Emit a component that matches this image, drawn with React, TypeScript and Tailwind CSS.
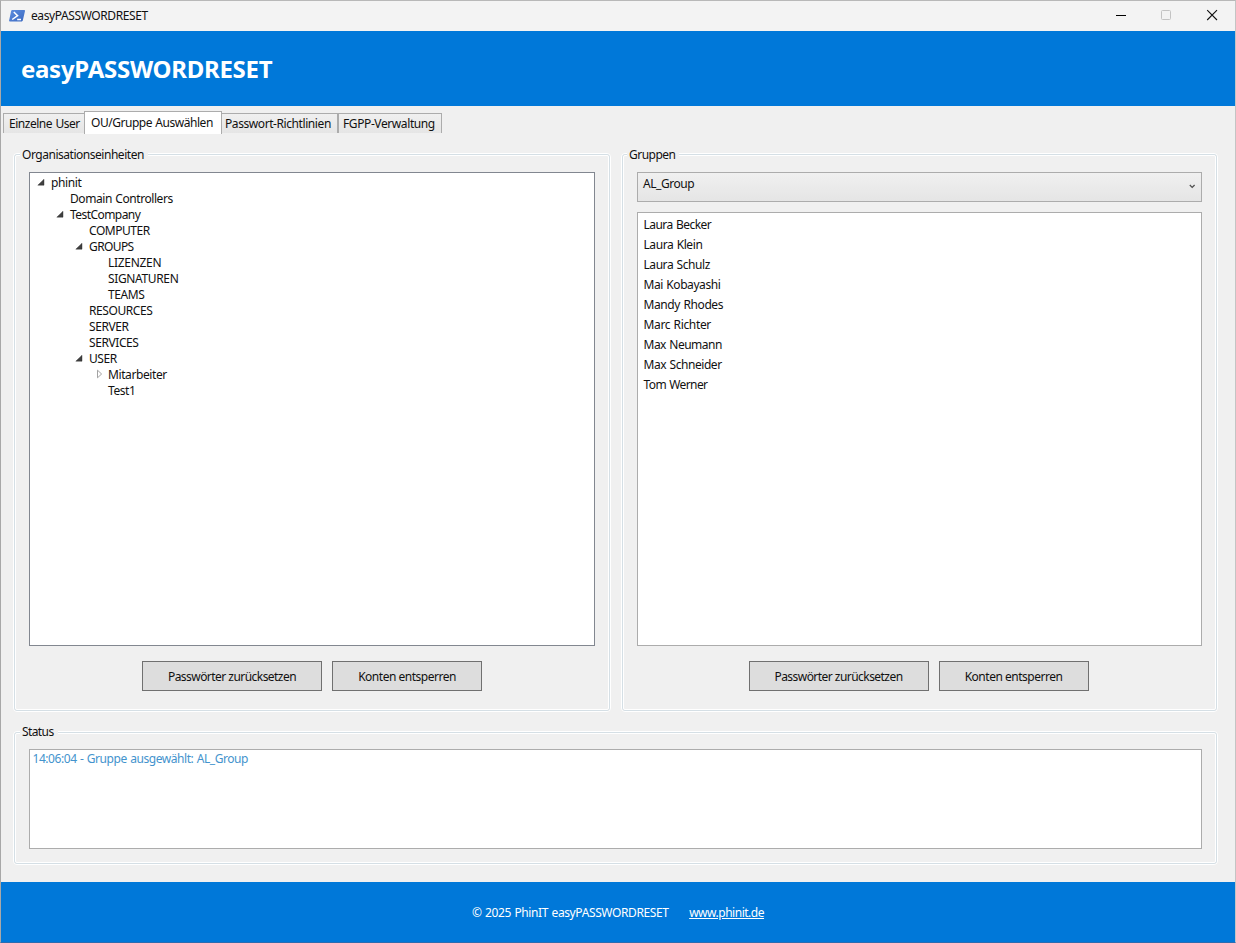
import type { ReactNode } from "react";

type Entry = { text: string; tracking: string };
type Node = Entry & { indent: string; state?: "open" | "closed" };

const tree: Node[] = [
  { text: "phinit", tracking: "tracking-[-0.4px]", indent: "pl-[7px]", state: "open" },
  { text: "Domain Controllers", tracking: "tracking-[-0.43px]", indent: "pl-[26px]" },
  { text: "TestCompany", tracking: "tracking-[-0.56px]", indent: "pl-[26px]", state: "open" },
  { text: "COMPUTER", tracking: "tracking-[-0.46px]", indent: "pl-[45px]" },
  { text: "GROUPS", tracking: "tracking-[-0.6px]", indent: "pl-[45px]", state: "open" },
  { text: "LIZENZEN", tracking: "tracking-[-0.3px]", indent: "pl-[64px]" },
  { text: "SIGNATUREN", tracking: "tracking-[-0.36px]", indent: "pl-[64px]" },
  { text: "TEAMS", tracking: "tracking-[-0.4px]", indent: "pl-[64px]" },
  { text: "RESOURCES", tracking: "tracking-[-0.41px]", indent: "pl-[45px]" },
  { text: "SERVER", tracking: "tracking-[-0.42px]", indent: "pl-[45px]" },
  { text: "SERVICES", tracking: "tracking-[-0.42px]", indent: "pl-[45px]" },
  { text: "USER", tracking: "tracking-[-0.44px]", indent: "pl-[45px]", state: "open" },
  { text: "Mitarbeiter", tracking: "tracking-[-0.4px]", indent: "pl-[64px]", state: "closed" },
  { text: "Test1", tracking: "tracking-[-0.45px]", indent: "pl-[64px]" },
];

const members: Entry[] = [
  { text: "Laura Becker", tracking: "tracking-[-0.54px]" },
  { text: "Laura Klein", tracking: "tracking-[-0.42px]" },
  { text: "Laura Schulz", tracking: "tracking-[-0.44px]" },
  { text: "Mai Kobayashi", tracking: "tracking-[-0.43px]" },
  { text: "Mandy Rhodes", tracking: "tracking-[-0.4px]" },
  { text: "Marc Richter", tracking: "tracking-[-0.36px]" },
  { text: "Max Neumann", tracking: "tracking-[-0.5px]" },
  { text: "Max Schneider", tracking: "tracking-[-0.44px]" },
  { text: "Tom Werner", tracking: "tracking-[-0.6px]" },
];

function Toggle({ state }: { state?: "open" | "closed" }) {
  return (
    <svg width="14" height="16" viewBox="0 0 14 16" className="shrink-0">
      {state === "open" && <path d="M7 5.2V11.2H0.8Z" fill="#404040" stroke="#262626" strokeWidth="0.4" />}
      {state === "closed" && <path d="M3.5 4.2V11.8L7.6 8Z" fill="#fff" stroke="#989898" strokeWidth="0.9" />}
    </svg>
  );
}

function GroupBox({ title, tracking, className, children }: { title: string; tracking: string; className: string; children: ReactNode }) {
  return (
    <section className={`relative rounded-[4px] border border-white ${className}`}>
      <div className="h-full rounded-[3px] border border-[#d5dfe5]">
        <div className="flex h-full flex-col rounded-[2px] border border-white px-[13px] pt-4">{children}</div>
      </div>
      <h2 className={`absolute left-[6px] h-4 bg-[#f0f0f0] pr-1 pl-[2px] leading-4 whitespace-nowrap ${tracking}`}>{title}</h2>
    </section>
  );
}

function Actions({ className = "" }: { className?: string }) {
  return (
    <div className={`mt-[15px] flex justify-center gap-[10px] ${className}`}>
      <button className="h-[30px] w-[180px] border border-[#707070] bg-[#dddddd] pt-px tracking-[-0.54px]">Passwörter zurücksetzen</button>
      <button className="h-[30px] w-[150px] border border-[#707070] bg-[#dddddd] pt-px tracking-[-0.49px]">Konten entsperren</button>
    </div>
  );
}

const idleTab = "flex h-5 items-center border border-b-0 border-[#acacac] bg-linear-to-b from-[#f0f0f0] to-[#e5e5e5] whitespace-nowrap";

export default function App() {
  return (
    <div className="flex h-[943px] w-[1236px] flex-col overflow-hidden border border-t-[#b8b8b8] border-r-[#c4c4c4] border-b-[#2b6cb0] border-l-[#a8a8a8] bg-[#f0f0f0] font-['Noto_Sans',sans-serif] text-[12px] text-[#111] [word-spacing:0.7px]">
      <div className="flex h-[30px] shrink-0 items-center bg-[#f3f3f3] pl-2">
        <svg width="17" height="14" viewBox="0 0 17 14" className="-mt-px mr-[5px]">
          <defs>
            <linearGradient id="ps" x1="0" y1="0" x2="1" y2="1">
              <stop offset="0" stopColor="#5f8fe0" />
              <stop offset="1" stopColor="#3a68c0" />
            </linearGradient>
          </defs>
          <path d="M3.2 1H15.2Q16.2 1 16 2L13.8 11.6Q13.6 12.4 12.8 12.4H0.9Q-0.1 12.4 0.1 11.5L2.2 1.8Q2.4 1 3.2 1Z" fill="url(#ps)" />
          <path d="M4.8 3L8.6 6.7L3.2 10.5M8.2 10.4H12" fill="none" stroke="#fff" strokeWidth="1.5" />
        </svg>
        <span className="tracking-[-0.4px]">easyPASSWORDRESET</span>
        <svg width="128" height="30" viewBox="0 0 128 30" className="ml-auto">
          <path d="M9 14.5H19" stroke="#000" />
          <rect x="54.5" y="9.5" width="9" height="9" rx="1" fill="none" stroke="#c3c3c3" />
          <path d="M100.2 9.2L110 19M110 9.2L100.2 19" stroke="#111" strokeWidth="1.1" />
        </svg>
      </div>

      <header className="flex h-[75px] shrink-0 items-center bg-[#0078d9] pt-px pl-5">
        <h1 className="text-[24px] font-bold tracking-[-0.29px] text-white">easyPASSWORDRESET</h1>
      </header>

      <nav className="flex h-7 shrink-0 pt-[5px] pl-[2px]">
        <div className={`mt-[2px] w-[81px] border-r-0 pl-[5px] tracking-[-0.47px] ${idleTab}`}>Einzelne User</div>
        <div className="-mr-px flex h-[23px] w-[138px] items-center border border-b-0 border-[#acacac] bg-white pb-px pl-[6px] tracking-[-0.47px] whitespace-nowrap">OU/Gruppe Auswählen</div>
        <div className={`mt-[2px] w-[117px] pl-[3px] tracking-[-0.42px] ${idleTab}`}>Passwort-Richtlinien</div>
        <div className={`mt-[2px] w-[104px] pl-[4px] tracking-[-0.4px] ${idleTab}`}>FGPP-Verwaltung</div>
      </nav>

      <main className="flex min-h-0 flex-1 flex-col gap-[19px] px-3 pt-[19px]">
        <div className="flex gap-[10px]">
          <GroupBox title="Organisationseinheiten" tracking="-top-[7px] tracking-[-0.47px]" className="h-[559px] w-[598px]">
            <ul className="h-[474px] border border-[#828790] bg-white pt-px">
              {tree.map((n) => (
                <li key={n.text} className={`flex h-4 leading-[18px] ${n.indent}`}>
                  <Toggle state={n.state} />
                  <span className={n.tracking}>{n.text}</span>
                </li>
              ))}
            </ul>
            <Actions />
          </GroupBox>
          <GroupBox title="Gruppen" tracking="-top-[7px] -ml-px tracking-[-0.52px]" className="h-[559px] w-[597px]">
            <div className="flex h-[30px] justify-between border border-[#acacac] bg-linear-to-b from-[#f0f0f0] to-[#e5e5e5] pt-[2px] pl-[5px] leading-[18px]">
              <span className="tracking-[-0.44px]">AL_Group</span>
              <svg width="14" height="20" viewBox="0 0 14 20">
                <path d="M2.8 10L5.2 12.4L7.6 10" fill="none" stroke="#505050" strokeWidth="1.3" />
              </svg>
            </div>
            <ul className="mt-[10px] h-[434px] border border-[#acacac] bg-white pt-[2px]">
              {members.map((m) => (
                <li key={m.text} className="h-5 pl-[5.5px] leading-5">
                  <span className={m.tracking}>{m.text}</span>
                </li>
              ))}
            </ul>
            <Actions className="mr-px -ml-px" />
          </GroupBox>
        </div>
        <GroupBox title="Status" tracking="-top-2 tracking-[-0.6px]" className="h-[134px] w-[1205px]">
          <div className="-mt-px h-[100px] border border-[#acacac] bg-white pl-[2.5px] leading-[18px] tracking-[-0.44px] text-[#4393cd]">14:06:04 - Gruppe ausgewählt: AL_Group</div>
        </GroupBox>
      </main>

      <footer className="flex h-[60px] shrink-0 items-center bg-[#0078d9] pt-[2px] pl-[471px] text-white">
        <span className="tracking-[-0.38px]">© 2025 PhinIT easyPASSWORDRESET</span>
        <a className="ml-[20.5px] tracking-[-0.48px] underline underline-offset-[1px]">www.phinit.de</a>
      </footer>
    </div>
  );
}
